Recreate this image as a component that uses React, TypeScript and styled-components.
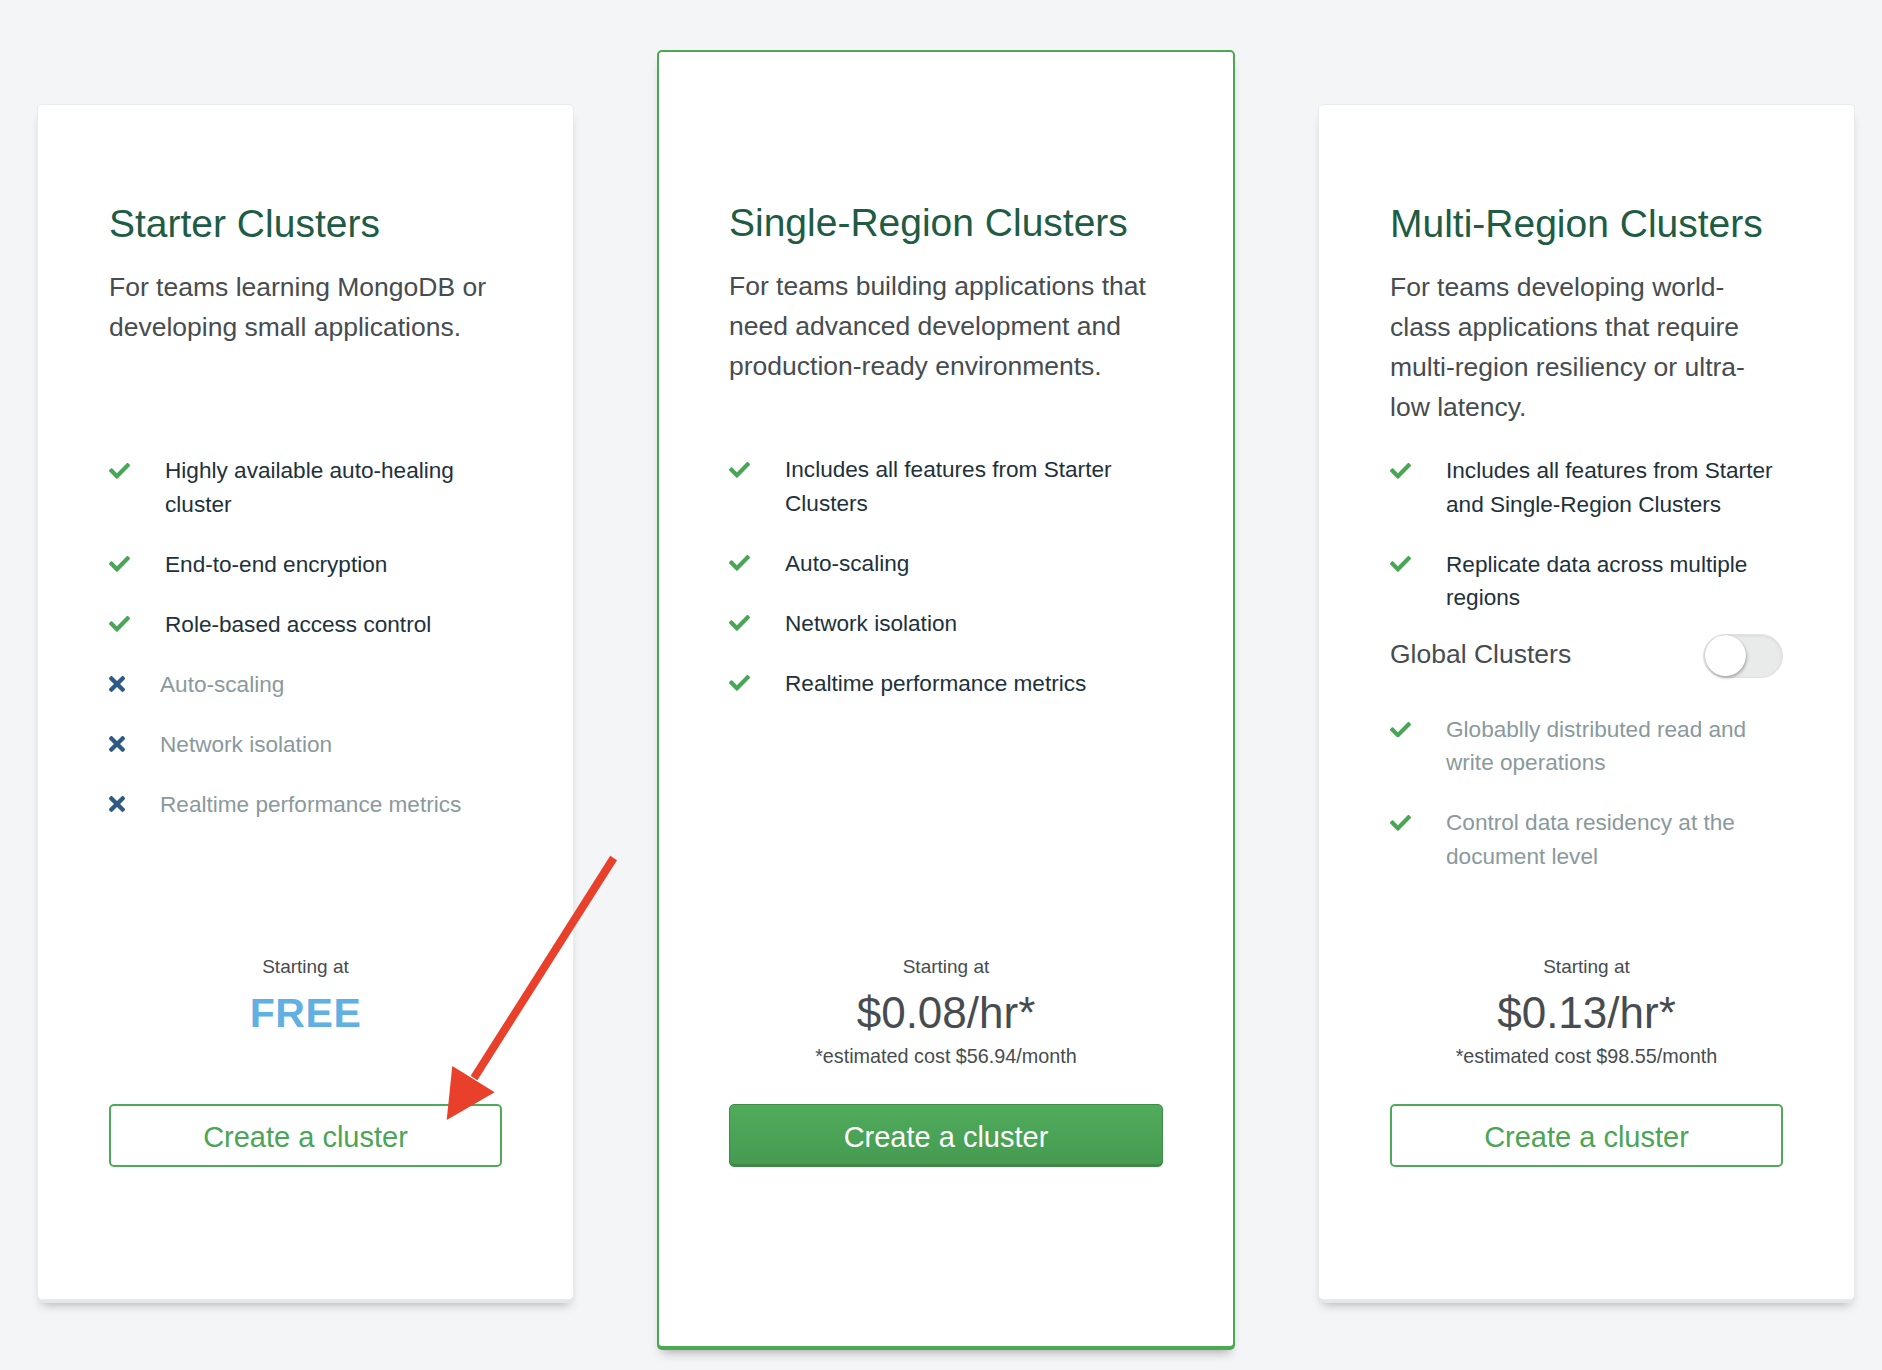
import React from 'react';
import styled, { createGlobalStyle } from 'styled-components';

const GlobalStyle = createGlobalStyle`
  html, body {
    margin: 0;
    padding: 0;
    background: #f4f5f7;
  }
  body {
    font-family: "Liberation Sans", Arial, sans-serif;
    -webkit-font-smoothing: antialiased;
  }
  * { box-sizing: border-box; }
`;

const Page = styled.main`
  position: relative;
  min-height: 1370px;
  padding: 50px 0 0 37px;
  display: flex;
  align-items: flex-start;
  gap: 83px;
`;

const Card = styled.section<{ $featured?: boolean }>`
  display: flex;
  flex-direction: column;
  flex-shrink: 0;
  background: #ffffff;
  border-radius: 5px;
  width: ${p => (p.$featured ? 578 : 537)}px;
  height: ${p => (p.$featured ? 1298 : 1196)}px;
  margin-top: ${p => (p.$featured ? 0 : 54)}px;
  border: ${p => (p.$featured ? '2px solid #4da852' : '1px solid #e9ecee')};
  padding: ${p => (p.$featured ? '147px 70px 179px' : '95px 71px 132px')};
  box-shadow: ${p =>
    p.$featured
      ? '0 2px 0 #4da852, 0 9px 10px -5px rgba(0, 0, 0, 0.32)'
      : '0 3px 0 #e4e6e7, 0 9px 10px -5px rgba(0, 0, 0, 0.3)'};
`;

const Title = styled.h2`
  margin: 0;
  font-size: 39px;
  line-height: 47px;
  font-weight: 400;
  color: #205b44;
  white-space: nowrap;
`;

const Description = styled.p`
  margin: 20px 0 0;
  padding-right: 12px;
  min-height: 160px;
  font-size: 26.5px;
  line-height: 40px;
  color: #464c4f;
`;

const FeatureList = styled.ul<{ $gapTop?: number }>`
  list-style: none;
  margin: ${p => p.$gapTop ?? 27}px 0 0;
  padding: 0;
  display: flex;
  flex-direction: column;
  gap: 26.5px;
`;

const Feature = styled.li<{ $muted?: boolean }>`
  display: flex;
  align-items: flex-start;
  font-size: 22.6px;
  line-height: 33.5px;
  color: ${p => (p.$muted ? '#8a999d' : '#21313c')};
`;

const IconBox = styled.span`
  flex-shrink: 0;
  height: 33.5px;
  display: flex;
  align-items: center;
  margin-right: 35px;
`;

const ToggleRow = styled.div`
  margin-top: 19.5px;
  height: 44px;
  display: flex;
  align-items: center;
  justify-content: space-between;
`;

const ToggleLabel = styled.span`
  font-size: 26.5px;
  line-height: 30px;
  margin-top: -4px;
  color: #464c4f;
`;

const Switch = styled.span`
  position: relative;
  width: 80px;
  height: 44px;
  border-radius: 22px;
  background: #e9eaea;
  border: 1px solid #e0e1e1;
  box-shadow: inset 0 1px 3px rgba(0, 0, 0, 0.08);
`;

const Knob = styled.span`
  position: absolute;
  left: 1px;
  top: 0px;
  width: 41px;
  height: 41px;
  border-radius: 50%;
  background: #ffffff;
  box-shadow: 1px 2px 3px rgba(0, 0, 0, 0.25), 0 0 1px rgba(0, 0, 0, 0.2);
`;

const Footer = styled.div`
  margin-top: auto;
  display: flex;
  flex-direction: column;
`;

const PriceBlock = styled.div`
  height: 114px;
  display: flex;
  flex-direction: column;
  align-items: center;
`;

const StartingAt = styled.span`
  font-size: 19px;
  line-height: 24px;
  color: #464c4f;
`;

const Price = styled.span<{ $free?: boolean }>`
  margin-top: 8px;
  font-size: ${p => (p.$free ? 41 : 44)}px;
  line-height: 52px;
  font-weight: ${p => (p.$free ? 700 : 400)};
  letter-spacing: ${p => (p.$free ? '0.6px' : '0')};
  color: ${p => (p.$free ? '#60b1e2' : '#464c4f')};
`;

const Estimate = styled.span`
  margin-top: 5px;
  font-size: 19.8px;
  line-height: 24px;
  color: #464c4f;
`;

const CreateButton = styled.button<{ $primary?: boolean }>`
  margin-top: 35px;
  width: 100%;
  height: 63px;
  padding: 4px 0 0;
  border-radius: 5px;
  font-family: inherit;
  font-size: 29px;
  cursor: pointer;
  border: ${p => (p.$primary ? '1px solid #3d8b46' : '2px solid #4fa958')};
  background: ${p => (p.$primary ? 'linear-gradient(#50ab5c, #459b50)' : '#ffffff')};
  color: ${p => (p.$primary ? '#ffffff' : '#4aa555')};
  box-shadow: ${p => (p.$primary ? 'inset 0 -2px 0 rgba(0,0,0,0.12)' : 'none')};
`;

const ArrowLayer = styled.svg`
  position: absolute;
  left: 0;
  top: 0;
  width: 1882px;
  height: 1370px;
  pointer-events: none;
`;

const CheckIcon = () => (
  <svg width="21" height="15.75" viewBox="0 64 512 384" aria-hidden="true">
    <path
      fill="#4aa657"
      d="M173.898 439.404l-166.4-166.4c-9.997-9.997-9.997-26.206 0-36.204l36.203-36.204c9.997-9.998 26.207-9.998 36.204 0L192 312.69 432.095 72.596c9.997-9.997 26.207-9.997 36.204 0l36.203 36.204c9.997 9.997 9.997 26.206 0 36.204l-294.4 294.401c-9.998 9.997-26.207 9.997-36.204-.001z"
    />
  </svg>
);

const CrossIcon = () => (
  <svg width="16" height="16" viewBox="0 80 352 352" aria-hidden="true">
    <path
      fill="#2e5985"
      d="M242.72 256l100.07-100.07c12.28-12.28 12.28-32.19 0-44.48l-22.24-22.24c-12.28-12.28-32.19-12.28-44.48 0L176 189.28 75.93 89.21c-12.28-12.280-32.19-12.28-44.48 0L9.21 111.45c-12.28 12.28-12.28 32.19 0 44.48L109.28 256 9.21 356.07c-12.28 12.28-12.28 32.19 0 44.48l22.24 22.24c12.28 12.28 32.2 12.28 44.48 0L176 322.72l100.07 100.07c12.28 12.28 32.2 12.28 44.48 0l22.24-22.24c12.28-12.28 12.28-32.19 0-44.48L242.72 256z"
    />
  </svg>
);

type Item = { text: string; ok: boolean; muted?: boolean };

const Features = ({ items, gapTop }: { items: Item[]; gapTop?: number }) => (
  <FeatureList $gapTop={gapTop}>
    {items.map(it => (
      <Feature key={it.text} $muted={it.muted ?? !it.ok}>
        <IconBox>{it.ok ? <CheckIcon /> : <CrossIcon />}</IconBox>
        <span>{it.text}</span>
      </Feature>
    ))}
  </FeatureList>
);

export default function App() {
  return (
    <>
      <GlobalStyle />
      <Page>
        <Card>
          <Title>Starter Clusters</Title>
          <Description>For teams learning MongoDB or developing small applications.</Description>
          <Features
            items={[
              { text: 'Highly available auto-healing cluster', ok: true },
              { text: 'End-to-end encryption', ok: true },
              { text: 'Role-based access control', ok: true },
              { text: 'Auto-scaling', ok: false },
              { text: 'Network isolation', ok: false },
              { text: 'Realtime performance metrics', ok: false },
            ]}
          />
          <Footer>
            <PriceBlock>
              <StartingAt>Starting at</StartingAt>
              <Price $free>FREE</Price>
            </PriceBlock>
            <CreateButton>Create a cluster</CreateButton>
          </Footer>
        </Card>

        <Card $featured>
          <Title>Single-Region Clusters</Title>
          <Description>
            For teams building applications that need advanced development and production-ready
            environments.
          </Description>
          <Features
            items={[
              { text: 'Includes all features from Starter Clusters', ok: true },
              { text: 'Auto-scaling', ok: true },
              { text: 'Network isolation', ok: true },
              { text: 'Realtime performance metrics', ok: true },
            ]}
          />
          <Footer>
            <PriceBlock>
              <StartingAt>Starting at</StartingAt>
              <Price>$0.08/hr*</Price>
              <Estimate>*estimated cost $56.94/month</Estimate>
            </PriceBlock>
            <CreateButton $primary>Create a cluster</CreateButton>
          </Footer>
        </Card>

        <Card>
          <Title>Multi-Region Clusters</Title>
          <Description>
            For teams developing world-class applications that require multi-region resiliency or
            ultra-low latency.
          </Description>
          <Features
            items={[
              { text: 'Includes all features from Starter and Single-Region Clusters', ok: true },
              { text: 'Replicate data across multiple regions', ok: true },
            ]}
          />
          <ToggleRow>
            <ToggleLabel>Global Clusters</ToggleLabel>
            <Switch role="switch" aria-checked="false">
              <Knob />
            </Switch>
          </ToggleRow>
          <Features
            gapTop={34.7}
            items={[
              { text: 'Globablly distributed read and write operations', ok: true, muted: true },
              { text: 'Control data residency at the document level', ok: true, muted: true },
            ]}
          />
          <Footer>
            <PriceBlock>
              <StartingAt>Starting at</StartingAt>
              <Price>$0.13/hr*</Price>
              <Estimate>*estimated cost $98.55/month</Estimate>
            </PriceBlock>
            <CreateButton>Create a cluster</CreateButton>
          </Footer>
        </Card>

        <ArrowLayer viewBox="0 0 1882 1370" aria-hidden="true">
          <line x1="613.6" y1="858" x2="474" y2="1078" stroke="#e8402a" strokeWidth="8" />
          <polygon points="446.7,1120 452.3,1066 494.7,1092.3" fill="#e8402a" />
        </ArrowLayer>
      </Page>
    </>
  );
}
